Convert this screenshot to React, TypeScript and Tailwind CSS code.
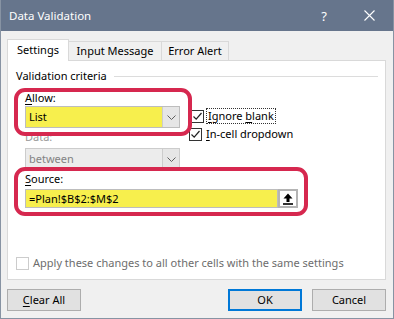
import type { ReactNode } from "react";

const Chevron = ({ color = "#5f5f5f" }: { color?: string }) => (
  <svg width="9" height="5" viewBox="0 0 9 5">
    <path d="M0.5 0.5 L4.5 4.5 L8.5 0.5" fill="none" stroke={color} strokeWidth="1" />
  </svg>
);

const CheckBox = ({ checked, disabled }: { checked?: boolean; disabled?: boolean }) => (
  <div
    className={
      "w-[13px] h-[13px] shrink-0 border bg-white flex items-center justify-center " +
      (disabled ? "border-[#cccccc]" : "border-[#333333]")
    }
  >
    {checked && (
      <svg width="11" height="11" viewBox="0 0 11 11">
        <path d="M1.5 5.5 L4.2 8.2 L9.5 2" fill="none" stroke="#222" strokeWidth="1.2" />
      </svg>
    )}
  </div>
);

const U = ({ children }: { children: ReactNode }) => <span className="underline underline-offset-2">{children}</span>;

const Select = ({ value, yellow, disabled }: { value: string; yellow?: boolean; disabled?: boolean }) => (
  <div
    className={
      "w-[155px] h-[22px] flex border " +
      (yellow ? "border-[#bdbdbd] bg-[#f7ef4d]" : "border-[#cccccc] bg-[#ececec]")
    }
  >
    <div className={"flex-1 flex items-center pl-[3px] " + (disabled ? "text-[#838383]" : "text-black")}>{value}</div>
    <div className="w-[17px] flex items-center justify-center bg-[#e6e6e6] border-l border-[#cccccc]">
      <Chevron />
    </div>
  </div>
);

const Button = ({ children, primary }: { children: ReactNode; primary?: boolean }) => (
  <div
    className={
      "w-[74px] h-[22px] flex items-center justify-center bg-[#e1e1e1] " +
      (primary ? "border-2 border-[#0078d7]" : "border border-[#adadad]")
    }
  >
    {children}
  </div>
);

export default function App() {
  return (
    <div
      className="w-[394px] h-[319px] flex flex-col bg-[#f0f0f0] border-x border-b border-[#8793a3] text-[11px] leading-[16px] text-black overflow-hidden whitespace-nowrap"
      style={{ fontFamily: '"Noto Sans", "Open Sans", sans-serif' }}
    >
      <div className="h-[31px] -mx-px bg-[#66758c] flex items-center text-white shrink-0">
        <span className="ml-[9px] text-[11.5px]">Data Validation</span>
        <span className="ml-auto mr-[37px] text-[13px]">?</span>
        <svg width="11" height="11" viewBox="0 0 11 11" className="mr-[19px]">
          <path d="M0.5 0.5 L10.5 10.5 M10.5 0.5 L0.5 10.5" stroke="#fff" strokeWidth="1.1" />
        </svg>
      </div>

      <div className="pl-[6px] pt-[7px] flex flex-col">
        <div className="flex items-end h-[22px]">
          <div className="w-[62px] h-[22px] bg-white border-x border-t border-[#d9d9d9] flex items-center justify-center relative z-10 -mb-px pb-[1px]">
            Settings
          </div>
          <div className="w-[93px] h-[19px] border-t border-r border-[#d9d9d9] flex items-center justify-center">
            Input Message
          </div>
          <div className="w-[67px] h-[19px] border-t border-r border-[#d9d9d9] flex items-center justify-center">
            Error Alert
          </div>
        </div>

        <div className="w-[379px] h-[220px] bg-white border border-[#d9d9d9] flex flex-col pl-[8px]">
          <div className="mt-[7px] h-[16px] flex items-center pr-[7px]">
            <span className="shrink-0">Validation criteria</span>
            <div className="ml-[7px] flex-1 h-px bg-[#dcdcdc]" />
          </div>

          <div className="flex items-start mt-[4px] h-[48px]">
            <div className="-ml-[2px] w-[178px] h-[48px] shrink-0 rounded-[11px] border-4 border-[#d6284f] pl-[7px] relative z-10">
              <div className="leading-[14px] mt-[-1px]">
                <U>A</U>llow:
              </div>
              <div className="mt-[1px]">
                <Select value="List" yellow />
              </div>
            </div>
            <div className="flex flex-col mt-[20px] -ml-[1px]">
              <div className="flex items-center gap-[2px]">
                <CheckBox checked />
                <span className="border border-dotted border-[#333] px-px leading-[14px]">
                  <U>I</U>gnore <U>b</U>lank
                </span>
              </div>
              <div className="flex items-center gap-[3px] mt-[3px] -ml-[2px]">
                <CheckBox checked />
                <span className="pl-px leading-[14px]">
                  <U>I</U>n-cell dropdown
                </span>
              </div>
            </div>
          </div>

          <div className="ml-[9px] -mt-[6px] leading-[14px] text-[#9a9a9a]">Data:</div>
          <div className="ml-[9px] mt-[4px]">
            <Select value="between" disabled />
          </div>

          <div className="-ml-[2px] -mt-[3px] w-[294px] h-[49px] rounded-[11px] border-4 border-[#d6284f] pl-[7px] relative z-10">
            <div className="leading-[14px] mt-[1px]">
              <U>S</U>ource:
            </div>
            <div className="mt-[3px] flex h-[19px]">
              <div className="w-[253px] bg-[#f7ef4d] border border-[#bdbdbd] flex items-center pl-[3px]">
                =Plan!$B$2:$M$2
              </div>
              <div className="w-[20px] bg-white border-2 border-[#b4b4b4] flex items-center justify-center">
                <svg width="10" height="12" viewBox="0 0 10 12">
                  <path d="M5 0.5 L9.5 5.5 L6.5 5.5 L6.5 9 L3.5 9 L3.5 5.5 L0.5 5.5 Z" fill="#000" />
                  <rect x="0" y="10.2" width="10" height="1.6" fill="#000" />
                </svg>
              </div>
            </div>
          </div>

          <div className="mt-[39px] flex items-center gap-[4px] text-[#6d6d6d]">
            <CheckBox disabled />
            <span>Apply these changes to all other cells with the same settings</span>
          </div>
        </div>

        <div className="flex mt-[9px] pr-[7px]">
          <Button>
            <U>C</U>lear All
          </Button>
          <div className="ml-auto flex gap-[10px]">
            <Button primary>OK</Button>
            <Button>Cancel</Button>
          </div>
        </div>
      </div>
    </div>
  );
}
